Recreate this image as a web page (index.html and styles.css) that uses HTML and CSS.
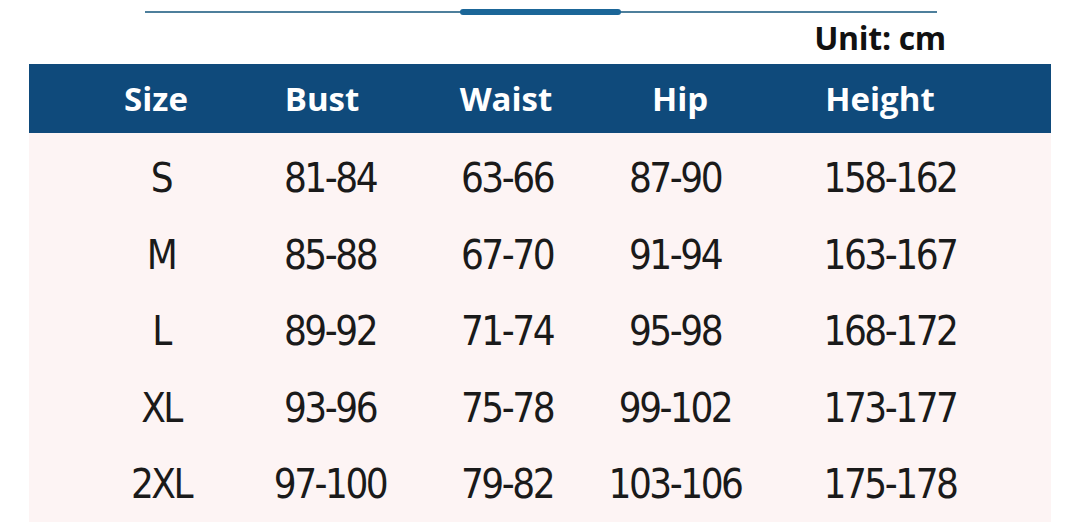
FILE: index.html
```html
<!DOCTYPE html>
<html>
<head>
<meta charset="utf-8">
<link rel="stylesheet" href="styles.css">
</head>
<body>
<div class="page">
  <div class="top">
    <div class="rule"><div class="rule-thick"></div></div>
    <div class="unit">Unit: cm</div>
  </div>
  <div class="table">
    <div class="head">
      <div>Size</div><div>Bust</div><div>Waist</div><div>Hip</div><div>Height</div>
    </div>
    <div class="body">
      <div class="row"><div>S</div><div>81-84</div><div>63-66</div><div>87-90</div><div>158-162</div></div>
      <div class="row"><div>M</div><div>85-88</div><div>67-70</div><div>91-94</div><div>163-167</div></div>
      <div class="row"><div>L</div><div>89-92</div><div>71-74</div><div>95-98</div><div>168-172</div></div>
      <div class="row"><div>XL</div><div>93-96</div><div>75-78</div><div>99-102</div><div>173-177</div></div>
      <div class="row"><div>2XL</div><div>97-100</div><div>79-82</div><div>103-106</div><div>175-178</div></div>
    </div>
  </div>
</div>
</body>
</html>
```
FILE: styles.css
```css
html, body {
  margin: 0;
  padding: 0;
  background: #ffffff;
}
.page {
  width: 1080px;
  height: 522px;
  overflow: hidden;
}
.top {
  height: 64px;
  position: relative;
}
.rule {
  position: absolute;
  left: 145px;
  top: 11px;
  width: 792px;
  height: 2px;
  background: #4d7f9c;
}
.rule-thick {
  position: absolute;
  left: 315px;
  top: -2px;
  width: 161px;
  height: 6px;
  border-radius: 3px;
  background: #1b6698;
}
.unit {
  position: absolute;
  right: 134px;
  top: 19px;
  font-family: "Open Sans", sans-serif;
  font-weight: 700;
  font-size: 32px;
  line-height: 38px;
  letter-spacing: -0.3px;
  color: #111111;
}
.table {
  margin: 0 29px;
  width: 1022px;
}
.head {
  height: 69px;
  background: #0f4a7b;
  display: grid;
  grid-template-columns: 172px 160px 208px 140px 260px;
  padding-left: 41px;
  align-items: center;
  font-family: "Open Sans", sans-serif;
  font-weight: 700;
  font-size: 33px;
  color: #ffffff;
}
.head > div {
  text-align: center;
  line-height: 69px;
}
.body {
  background: #fdf4f4;
  padding-top: 7px;
  height: 390px;
}
.row {
  height: 76.5px;
  display: grid;
  grid-template-columns: 170px 168px 186px 150px 280px;
  padding-left: 47px;
  align-items: center;
  font-family: "DejaVu Sans Condensed", "Open Sans", sans-serif;
  font-size: 40px;
  color: #1a1a1a;
}
.row > div {
  text-align: center;
  letter-spacing: -2.5px;
}
```
